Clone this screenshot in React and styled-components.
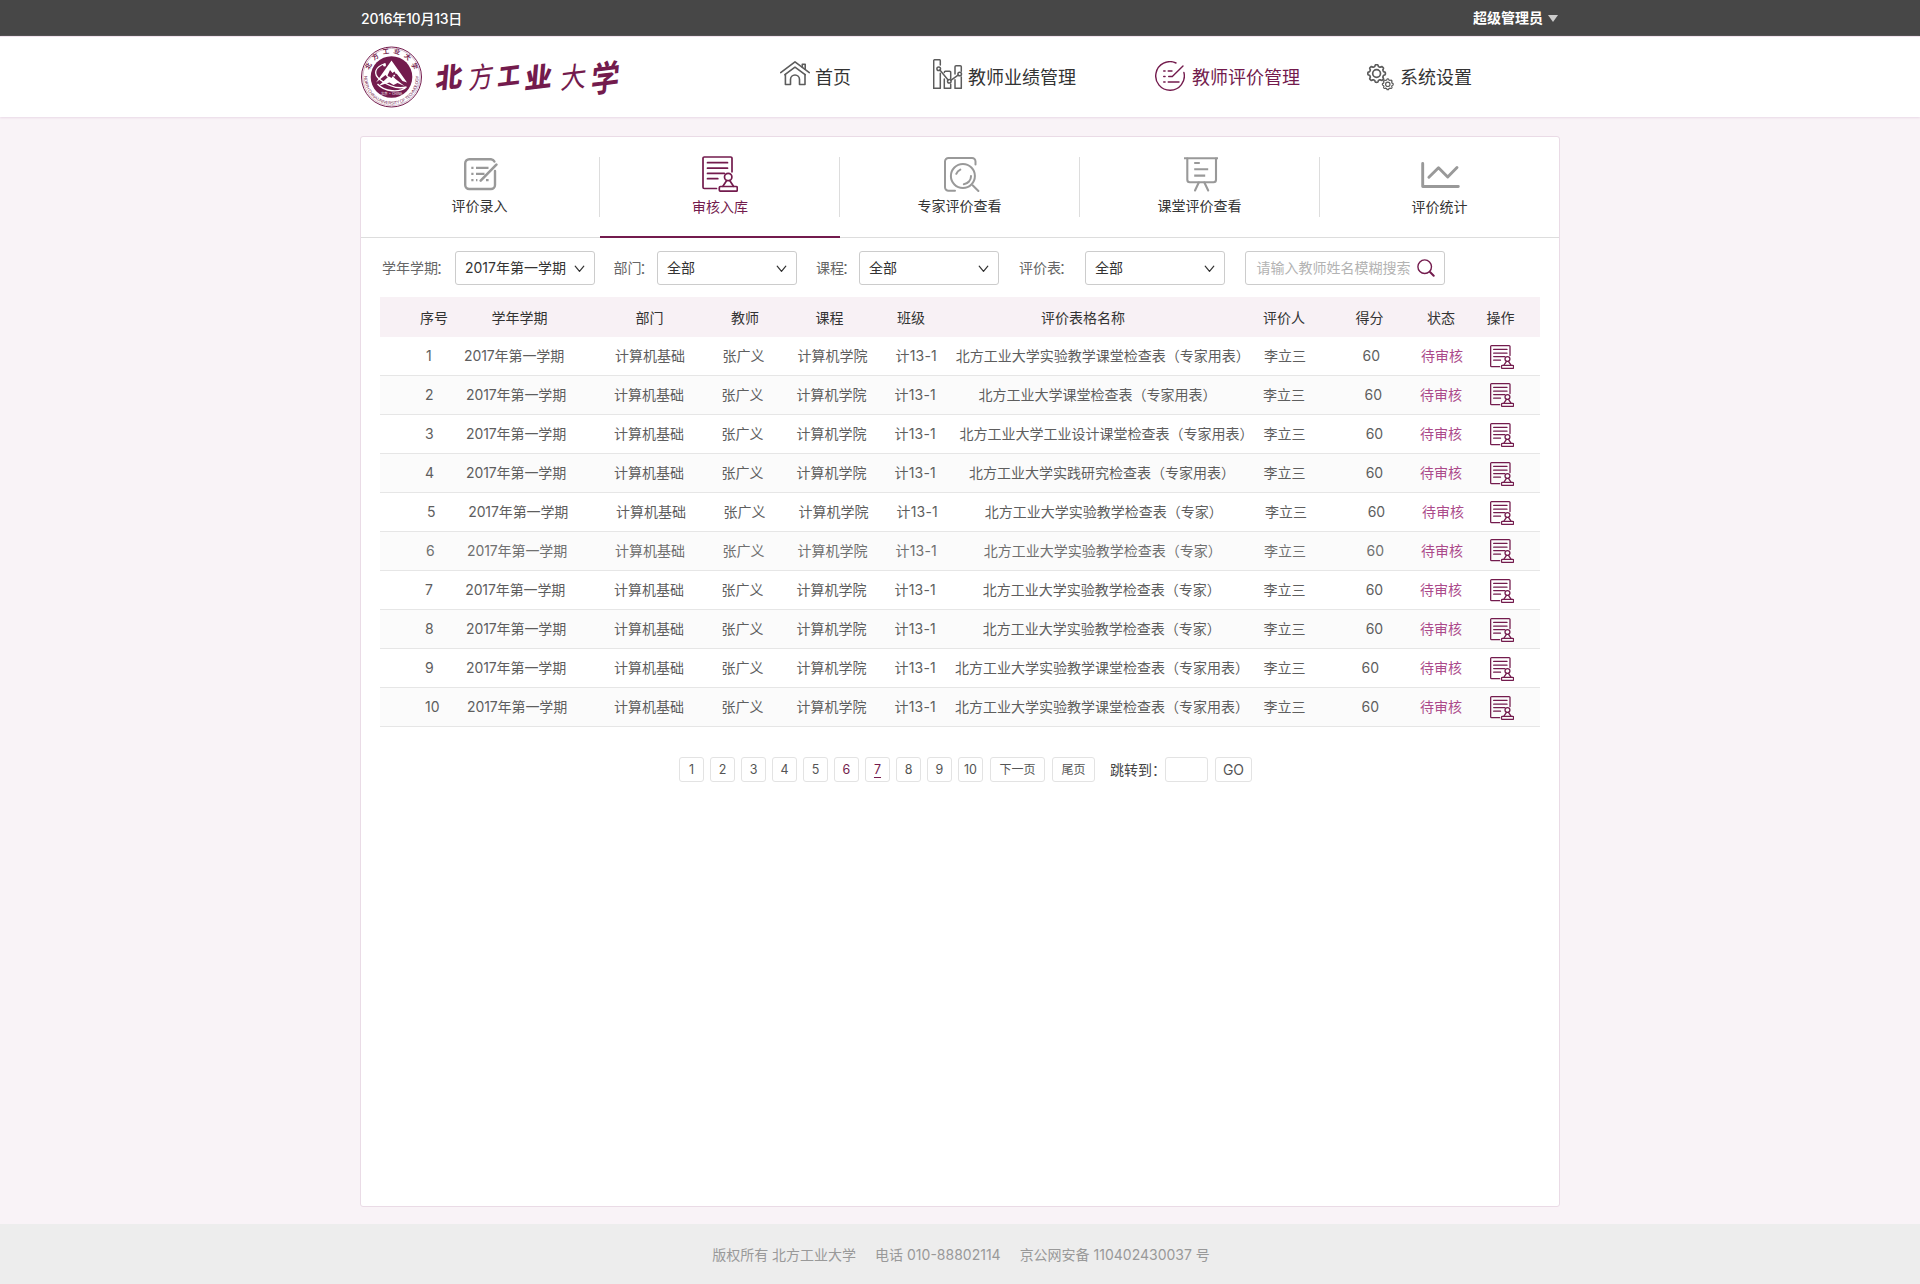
import React from "react";
import styled, { createGlobalStyle } from "styled-components";

const PLUM = "#731b4d";

const GlobalStyle = createGlobalStyle`
  * { box-sizing: border-box; }
  body {
    margin: 0;
    background: #f9f3f7;
    color: #333;
    font-family: Inter, "Noto Sans CJK SC", "Liberation Sans", sans-serif;
    font-size: 14px;
    line-height: 20px;
  }
  svg { display: block; flex: none; }
`;

/* ---------- page frame ---------- */

const Page = styled.div`
  display: flex;
  flex-direction: column;
  min-height: 1284px;
`;

const Container = styled.div`
  width: 1200px;
  margin: 0 auto;
  display: flex;
`;

const TopBar = styled.div`
  height: 36px;
  background: #474747;
  color: #fff;
  ${Container} {
    height: 36px;
    justify-content: space-between;
    align-items: center;
  }
`;

const DateText = styled.span`
  font-weight: 500;
  padding: 2px 0 0 1px;
  letter-spacing: -0.25px;
`;

const UserMenu = styled.div`
  display: flex;
  align-items: center;
  gap: 5px;
  font-weight: 700;
  padding-right: 2px;
`;

const Caret = styled.span`
  width: 0;
  height: 0;
  border: 5px solid transparent;
  border-top: 7px solid #ccc;
  border-bottom: 0;
  margin-top: 1px;
`;

const Header = styled.header`
  height: 81px;
  background: #fff;
  border-top: 1px solid #f1e3ee;
  box-shadow: 0 1px 2px #ead9e7;
  ${Container} { height: 80px; align-items: flex-start; }
`;

const Brand = styled.div`
  display: flex;
  width: 420px;
  padding-top: 9px;
`;

const NavItem = styled.a`
  display: flex;
  align-items: flex-start;
  gap: ${(p) => p.$gap}px;
  width: ${(p) => p.$width}px;
  color: ${(p) => (p.$active ? PLUM : "#333")};
  font-size: 18px;
  line-height: 24px;
  white-space: nowrap;
  svg { margin-top: ${(p) => p.$iconTop}px; color: ${(p) => (p.$active ? PLUM : "#5c5c5c")}; }
  span { margin-top: 28.5px; }
`;

const Panel = styled.main`
  width: 1200px;
  height: 1071px;
  margin: 19px auto 17px;
  background: #fff;
  border: 1px solid #eadbe6;
  border-radius: 3px;
`;

const Footer = styled.footer`
  height: 60px;
  background: #ededed;
  color: #999;
  display: flex;
  justify-content: center;
  align-items: center;
  gap: 19px;
  padding: 2px 0 0 2px;
`;

/* ---------- section tabs ---------- */

const Tabs = styled.nav`
  display: grid;
  grid-template-columns: 239px repeat(3, 240px) 239px;
  height: 101px;
  border-bottom: 1px solid #ddd;
`;

const Tab = styled.a`
  display: flex;
  flex-direction: column;
  align-items: center;
  justify-content: space-between;
  height: 101px;
  padding: 20px 0 ${(p) => (p.$low ? (p.$active ? 19 : 21) : 22)}px;
  color: ${(p) => (p.$active ? PLUM : "#333")};
  border-bottom: ${(p) => (p.$active ? `2px solid ${PLUM}` : "0")};
  background: ${(p) => (p.$last ? "none" : "linear-gradient(#ddd, #ddd) no-repeat right 20px / 1px 60px")};
  svg { color: ${(p) => (p.$active ? PLUM : "#999")}; margin-top: ${(p) => p.$iconTop}px; margin-left: ${(p) => p.$iconLeft || 0}px; }
`;

const TabText = styled.span`
  margin-right: ${(p) => p.$right || 0}px;
`;

/* ---------- filters ---------- */

const Filters = styled.div`
  display: flex;
  align-items: center;
  height: 34px;
  margin-top: 13px;
`;

const FilterLabel = styled.label`
  width: ${(p) => p.$width}px;
  padding-left: ${(p) => p.$pad}px;
  color: #666;
  white-space: nowrap;
`;

const Colon = styled.span`
  margin-left: -2px;
`;

const Select = styled.div`
  display: flex;
  align-items: center;
  justify-content: space-between;
  width: 140px;
  height: 34px;
  padding: 0 9px 0 9px;
  border: 1px solid #ccc;
  border-radius: 3px;
  white-space: nowrap;
  svg { margin-top: 2px; }
`;

const Search = styled(Select)`
  width: 200px;
  margin-left: 20px;
  padding: 0 9px 0 10.5px;
  color: #b3b3b3;
  svg { color: ${PLUM}; margin-top: 0; }
`;

/* ---------- table ---------- */

const Table = styled.div`
  width: 1160px;
  margin: 12px 0 0 19px;
`;

const HeadRow = styled.div`
  display: grid;
  grid-template-columns: 71.5px 144px 95.5px 84.5px 81.5px 144px 222px 92.5px 71.5px 59.5px 1fr;
  align-items: center;
  height: 40px;
  padding: 1px 0 0 40px;
  background: #f8f1f5;
  white-space: nowrap;
`;

const Row = styled.div`
  display: grid;
  grid-template-columns: 39px 150px 107.5px 75px 98px 60px 308.5px 98.5px 58.5px 70px 1fr;
  align-items: center;
  height: 39px;
  padding-left: 45px;
  border-bottom: 1px solid #e6e6e6;
  background: ${(p) => (p.$striped ? "#fbfbfb" : "#fff")};
  color: ${(p) => (p.$faded ? "#707070" : "#5e5e5e")};
  white-space: nowrap;
`;

const Cell = styled.span`
  padding-left: ${(p) => p.$indent || 0}px;
  letter-spacing: ${(p) => p.$track || 0}px;
`;

const Status = styled(Cell)`
  color: #ab4a8a;
`;

const Action = styled.button`
  width: 24px;
  height: 24px;
  margin-top: ${(p) => p.$top}px;
  padding: 0;
  border: 0;
  background: none;
  color: ${PLUM};
`;

/* ---------- pagination ---------- */

const Pager = styled.div`
  display: flex;
  gap: 6px;
  margin: 30px 0 0 318px;
  font-size: 12px;
`;

const PageButton = styled.a`
  display: flex;
  justify-content: center;
  align-items: center;
  width: ${(p) => p.$width || 25}px;
  height: 25px;
  margin-left: ${(p) => p.$ml || 0}px;
  border: 1px solid #e3e3e3;
  border-radius: 3px;
  color: ${(p) => (p.$current ? PLUM : "#555")};
  font-size: ${(p) => p.$size || 12.5}px;
  text-decoration: ${(p) => (p.$underline ? "underline" : "none")};
  text-underline-offset: 3px;
  text-decoration-thickness: 1px;
`;

const JumpLabel = styled.span`
  width: 49px;
  margin-left: 9px;
  padding-top: 3px;
  font-size: 14px;
  color: #444;
  white-space: nowrap;
`;

/* ---------- drawings ---------- */

const line = {
  fill: "none",
  stroke: "currentColor",
  strokeLinecap: "round",
  strokeLinejoin: "round",
};

const HomeIcon = () => (
  <svg width="30" height="25" viewBox="0 0 30 25" {...line} strokeWidth="1.6">
    <path d="M.7 11.6 15 .9l14.3 10.7" />
    <path d="M4.9 13.7 15 6.2l10.1 7.5" />
    <path d="M5.4 13.5v10h5.1v-5a4.5 4.5 0 0 1 9 0v5H25v-10M22.3 6V3.3h2.9v5" />
  </svg>
);

const BarsIcon = () => (
  <svg width="30" height="30" viewBox="0 0 30 30" {...line} strokeWidth="1.5">
    <path d="M7.3 6V1.8A1.1 1.1 0 0 0 6.2.7H1.8A1.1 1.1 0 0 0 .7 1.8v27.5h6.6V14.2" />
    <path d="M11.3 20v9.3h6.4v-4M11.3 13.4a1.1 1.1 0 0 1 1.1-1.1h4.2a1.1 1.1 0 0 1 1.1 1.1v6" />
    <path d="M22 15V7.8a1.1 1.1 0 0 1 1.1-1.1h4.1a1.1 1.1 0 0 1 1.1 1.1v4.4M28.3 18v11.3H22v-8.5" />
    <circle cx="5.7" cy="9.7" r="1.8" />
    <circle cx="16.3" cy="22.3" r="1.8" />
    <circle cx="26.7" cy="15" r="1.8" />
    <path d="m6.9 11.1 8.2 9.8M17.8 21.3l7.3-5.2" />
  </svg>
);

const CheckListIcon = () => (
  <svg width="30" height="30" viewBox="0 0 30 30" {...line} strokeWidth="1.4">
    <path d="M28.9 11.5A14.3 14.3 0 1 1 21 2" />
    <path d="M28 5 17.3 15.5h-3.6M13.2 10H17M13.2 21H24M8.7 10h1.4M8.7 15.5h1.4M8.7 21h1.4" />
  </svg>
);

function gearPath(cx, cy, radius, depth) {
  const points = [];
  for (let i = 0; i < 96; i += 1) {
    const a = (i / 96) * Math.PI * 2;
    const r = radius - depth / 2 + (depth / 2) * Math.tanh(2.5 * Math.cos(8 * a));
    points.push(`${(cx + r * Math.cos(a)).toFixed(2)} ${(cy + r * Math.sin(a)).toFixed(2)}`);
  }
  return `M${points.join("L")}Z`;
}

const GearsIcon = () => (
  <svg width="27" height="27" viewBox="0 0 27 27" {...line}>
    <path d={gearPath(9.6, 9.5, 8.8, 1.7)} strokeWidth="1.7" />
    <circle cx="9.6" cy="9.5" r="3.9" strokeWidth="1.7" />
    <path d={gearPath(20.8, 20.3, 5.4, 1)} strokeWidth="1.2" />
    <circle cx="20.8" cy="20.3" r="2.2" strokeWidth="1.2" />
  </svg>
);

const EntryIcon = () => (
  <svg width="34" height="33" viewBox="0 0 34 33" {...line} strokeWidth="2.4">
    <path d="M30.4 3.6A4 4 0 0 0 27 1.2H5.2a4 4 0 0 0-4 4V27a4 4 0 0 0 4 4H27a4 4 0 0 0 4-4V13" />
    <path d="M32.4 6.6 16.7 22.6" strokeWidth="2.6" />
    <path d="M7.3 9.8h2.2M12 9.8h12.5M7.3 15.9h2.2M12 15.9h8.5M7.3 22.2h2.2M12 22.2h1.4M22 22.2h2.6" strokeLinecap="butt" strokeWidth="2.200" />
  </svg>
);

const AuditIcon = ({ size = 36, weight = 1.7 }) => (
  <svg width={size} height={size} viewBox="0 0 36 36" {...line} strokeWidth={weight}>
    <path d="M30 15.8V2.3A1.3 1.3 0 0 0 28.700 1H2.300A1.300 1.300 0 0 0 1 2.300V31.200a1.300 1.300 0 0 0 1.300 1.300H14.500" />
    <path d="M5.500 6.700H25.500M5.500 12.200H25.500M5.500 17.400H22.300M5.500 22.700H15.800" />
    <circle cx="26.200" cy="21" r="3.700" />
    <path d="M24.700 24.500 20.900 30.300M27.700 24.500 31.500 30.300" />
    <rect x="17.300" y="30.500" width="18" height="4.700" rx="1.200" />
  </svg>
);

const ExpertIcon = () => (
  <svg width="36" height="35" viewBox="0 0 36 35" {...line} strokeWidth="2">
    <path d="M31.500 7.500V4.500A3.500 3.500 0 0 0 28 1H4.500A3.500 3.500 0 0 0 1 4.500V30.300A3.500 3.500 0 0 0 4.500 33.800H11" />
    <circle cx="18.900" cy="19" r="12" />
    <path d="M28.600 28.300 34.400 34M12.300 16.800a8 8 0 0 1 4-4.200M27 19a8 8 0 0 1-7.200 8.200" />
  </svg>
);

const BoardIcon = () => (
  <svg width="34" height="35" viewBox="0 0 34 35" {...line} strokeWidth="2.100">
    <path d="M0 1.200h34M10.200 6h5.600M10.200 12.200h14M10.200 18.600h11" strokeLinecap="butt" />
    <path d="M3.300 1.500V22.800a2.500 2.500 0 0 0 2.500 2.500H29.500a2.500 2.500 0 0 0 2.500-2.500V1.500" />
    <path d="M14.800 25.500 11 33.500M20.400 25.500 24.200 33.500" />
  </svg>
);

const StatsIcon = () => (
  <svg width="39" height="27" viewBox="0 0 39 27" {...line} strokeWidth="2.900">
    <path d="M1.700 1.500V24.500H37.300M7.900 15.200 17.500 5.700 26.700 15 36 5.500" />
  </svg>
);

const ChevronIcon = () => (
  <svg width="11" height="8" viewBox="0 0 11 8" {...line} strokeWidth="1.200">
    <path d="M1.200 1.200 5.500 6.400 9.800 1.200" />
  </svg>
);

const SearchIcon = () => (
  <svg width="18" height="18" viewBox="0 0 18 18" {...line}>
    <circle cx="7.700" cy="7.700" r="6.800" strokeWidth="1.400" />
    <path d="m13 13 3.700 3.700" strokeWidth="2" />
  </svg>
);

const Seal = () => (
  <svg width="63" height="62" viewBox="-31.500 -31 63 62">
    <defs>
      <path id="ring-top" d="M-22.700-1A22.700 22.700 0 0 1 22.700-1" />
      <path id="ring-bottom" d="M-26.700-5A27.200 27.200 0 1 0 26.700-5" />
    </defs>
    <circle r="30" fill="#fff" stroke={PLUM} strokeWidth="1" />
    <circle r="28.600" fill="none" stroke={PLUM} strokeWidth=".3" />
    <circle r="20.800" fill={PLUM} />
    <g fill={PLUM} fontFamily='"Noto Sans CJK SC", sans-serif' textAnchor="middle">
      <text fontSize="6.500" fontWeight="700" letterSpacing="4">
        <textPath href="#ring-top" startOffset="52.500%">北方工业大学</textPath>
      </text>
      <text fontSize="4.300" fontWeight="500" fontFamily='"Liberation Sans", sans-serif' letterSpacing="-.2">
        <textPath href="#ring-bottom" startOffset="50%">NORTH CHINA UNIVERSITY OF TECHNOLOGY</textPath>
      </text>
      <text y="18.300" fontSize="3.300" fill="#fff">北京 · CHINA</text>
    </g>
    <path d="M-15.500 5.500 0-16.500 15.500 5.500 11 4 5-3.500 2.500 0-1-5-4 .5-6-2Z" fill="#fff" />
    <path d="M-13 9-4 .5-1-3 4 2 13 9 6 6 2 8-2 5.500-7 7Z" fill="#fff" />
    <path d="M-6-13.500C-17-10-19-3-11 3S7 12 15 10M-14 7C-7 15 8 16 15 10" fill="none" stroke="#fff" strokeWidth="1.300" />
    <circle cx="-7" cy="-12" r="1.500" fill="#fff" />
    <path d="M-4-1.500-1.500-7 1-4 3-5.500 5.500-1 2.500-2.500 0 1Z" fill={PLUM} />
  </svg>
);

const wordmark = [
  { char: "北", x: 12, y: 43, size: 27, weight: 900, sx: 1 },
  { char: "方", x: 45, y: 43, size: 28, weight: 400, sx: 0.9 },
  { char: "工", x: 74, y: 40, size: 24, weight: 900, sx: 0.95 },
  { char: "业", x: 101, y: 43, size: 27, weight: 900, sx: 1.020 },
  { char: "大", x: 137, y: 43, size: 28, weight: 400, sx: 0.92 },
  { char: "学", x: 167, y: 47, size: 35, weight: 700, sx: 0.82 },
];

const Wordmark = () => (
  <svg width="205" height="62" viewBox="0 0 205 62" fill={PLUM} fontFamily='"Noto Sans CJK SC", sans-serif'>
    {wordmark.map((w) => (
      <text
        key={w.char}
        fontSize={w.size}
        fontWeight={w.weight}
        transform={`translate(${w.x} ${w.y}) rotate(-7) skewX(-12) scale(${w.sx} 1)`}
      >
        {w.char}
      </text>
    ))}
  </svg>
);

/* ---------- data ---------- */

const columns = ["序号", "学年学期", "部门", "教师", "课程", "班级", "评价表格名称", "评价人", "得分", "状态", "操作"];

const LESSON = "北方工业大学实验教学课堂检查表（专家用表）";
const TEACHING = "北方工业大学实验教学检查表（专家）";

const rows = [
  { no: 1, name: LESSON, base: 1, term: 0, form: 1.2, by: 1, score: 1, top: 1 },
  { no: 2, name: "北方工业大学课堂检查表（专家用表）", base: 0, term: 2, form: 24, by: -0.5, score: 3, top: -1 },
  { no: 3, name: "北方工业大学工业设计课堂检查表（专家用表）", base: 0, term: 2, form: 5, by: 0.5, score: 4.2, top: 1 },
  { no: 4, name: "北方工业大学实践研究检查表（专家用表）", base: 0, term: 2, form: 14.5, by: 0.5, score: 4.2, top: 1 },
  { no: 5, name: TEACHING, base: 2, term: 4.2, form: 30.3, by: 2, score: 6.2, top: 1 },
  { no: 6, name: TEACHING, base: 1, term: 3, form: 29.3, by: 1, score: 5, top: -1, faded: true },
  { no: 7, name: TEACHING, base: 0, term: 1.2, form: 28.3, by: 0.5, score: 4.2, top: 1 },
  { no: 8, name: TEACHING, base: 0, term: 2, form: 28.3, by: 0.5, score: 4.2, top: 1 },
  { no: 9, name: LESSON, base: 0, term: 2, form: 0.5, by: 0.5, score: 0, top: 1 },
  { no: 10, name: LESSON, base: 0, term: 3, form: 0.5, by: 0.5, score: 0, top: 1 },
];

const pages = [1, 2, 3, 4, 5, 6, 7, 8, 9, 10];

const Label = ({ width, pad, children }) => (
  <FilterLabel $width={width} $pad={pad}>{children}<Colon>：</Colon></FilterLabel>
);

export default function App() {
  return (
    <Page>
      <GlobalStyle />
      <TopBar>
        <Container>
          <DateText>2016年10月13日</DateText>
          <UserMenu>超级管理员<Caret /></UserMenu>
        </Container>
      </TopBar>
      <Header>
        <Container>
          <Brand><Seal /><Wordmark /></Brand>
          <NavItem $width={153} $gap={5} $iconTop={24}><HomeIcon /><span>首页</span></NavItem>
          <NavItem $width={222} $gap={5} $iconTop={22}><BarsIcon /><span>教师业绩管理</span></NavItem>
          <NavItem $width={212} $gap={7} $iconTop={24} $active><CheckListIcon /><span>教师评价管理</span></NavItem>
          <NavItem $width={110} $gap={6} $iconTop={27}><GearsIcon /><span>系统设置</span></NavItem>
        </Container>
      </Header>

      <Panel>
        <Tabs>
          <Tab $iconTop={1}><EntryIcon /><TabText $right={2}>评价录入</TabText></Tab>
          <Tab $iconTop={-1} $active $low><AuditIcon /><TabText>审核入库</TabText></Tab>
          <Tab $iconTop={0} $iconLeft={4}><ExpertIcon /><TabText $right={1}>专家评价查看</TabText></Tab>
          <Tab $iconTop={0} $iconLeft={1}><BoardIcon /><TabText $right={1}>课堂评价查看</TabText></Tab>
          <Tab $iconTop={5} $iconLeft={1} $last $low><StatsIcon /><TabText>评价统计</TabText></Tab>
        </Tabs>

        <Filters>
          <Label width={94} pad={21}>学年学期</Label>
          <Select>2017年第一学期<ChevronIcon /></Select>
          <Label width={62} pad={18.5}>部门</Label>
          <Select>全部<ChevronIcon /></Select>
          <Label width={62} pad={19}>课程</Label>
          <Select>全部<ChevronIcon /></Select>
          <Label width={86} pad={20}>评价表</Label>
          <Select>全部<ChevronIcon /></Select>
          <Search>请输入教师姓名模糊搜索<SearchIcon /></Search>
        </Filters>

        <Table>
          <HeadRow>{columns.map((c) => <span key={c}>{c}</span>)}</HeadRow>
          {rows.map((r, i) => (
            <Row key={r.no} $striped={i % 2 === 1} $faded={r.faded}>
              <Cell $indent={r.base}>{r.no}</Cell>
              <Cell $indent={r.term} $track={-0.1}>2017年第一学期</Cell>
              <Cell $indent={r.base}>计算机基础</Cell>
              <Cell $indent={r.base}>张广义</Cell>
              <Cell $indent={r.base}>计算机学院</Cell>
              <Cell $indent={r.base} $track={0.2}>计13-1</Cell>
              <Cell $indent={r.form}>{r.name}</Cell>
              <Cell $indent={r.by}>李立三</Cell>
              <Cell $indent={r.score}>60</Cell>
              <Status $indent={r.base}>待审核</Status>
              <Action $top={r.top}><AuditIcon size={24} weight={1.9} /></Action>
            </Row>
          ))}
        </Table>

        <Pager>
          {pages.map((n) => (
            <PageButton key={n} $current={n === 6 || n === 7} $underline={n === 7}>{n}</PageButton>
          ))}
          <PageButton $width={55} $ml={1} $size={12}>下一页</PageButton>
          <PageButton $width={43} $ml={1} $size={12}>尾页</PageButton>
          <JumpLabel>跳转到：</JumpLabel>
          <PageButton $width={43} />
          <PageButton $width={37} $ml={1} $size={14}>GO</PageButton>
        </Pager>
      </Panel>

      <Footer>
        <span>版权所有 北方工业大学</span>
        <span>电话 010-88802114</span>
        <span>京公网安备 110402430037 号</span>
      </Footer>
    </Page>
  );
}
